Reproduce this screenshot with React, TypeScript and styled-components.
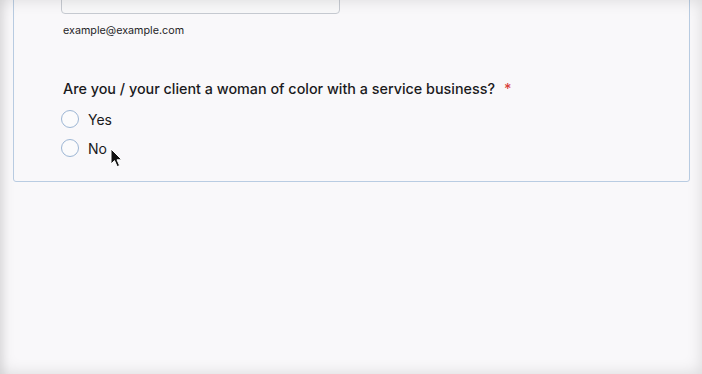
import React from "react";
import styled, { createGlobalStyle } from "styled-components";

const GlobalStyle = createGlobalStyle`
  html, body {
    margin: 0;
    padding: 0;
    background: #f9f8fa;
    overflow: hidden;
  }
  body {
    font-family: Inter, "Liberation Sans", sans-serif;
    color: #1d1d1f;
  }
`;

const Page = styled.div`
  height: 374px;
  padding: 0 12px 0 13px;
  box-sizing: border-box;
`;

const Vignette = styled.div`
  position: fixed;
  inset: 0;
  pointer-events: none;
  box-shadow: inset 0 0 16px rgba(0, 0, 0, 0.13), inset 10px 0 8px -6px rgba(0, 0, 0, 0.06);
`;

const Card = styled.div`
  margin-top: -43px;
  width: 677px;
  box-sizing: border-box;
  border: 1px solid #b9cce2;
  border-radius: 3px;
  padding: 16px 47px 21px;
  background: #f9f8fa;
`;

const InputBox = styled.div`
  width: 279px;
  height: 40px;
  box-sizing: border-box;
  border: 1px solid #c6cad1;
  border-radius: 4px;
  background: #f8f8f9;
`;

const Hint = styled.div`
  margin-top: 9px;
  padding-left: 2px;
  font-size: 10.75px;
  line-height: 16px;
  color: #262628;
`;

const Question = styled.div`
  margin-top: 39px;
  padding-left: 2px;
  font-size: 14.35px;
  line-height: 22px;
  font-weight: 500;
  color: #1a1a1c;
`;

const Required = styled.span`
  color: #d9403a;
  margin-left: 9px;
`;

const Options = styled.div`
  margin-top: 7px;
  display: flex;
  flex-direction: column;
  gap: 5px;
`;

const Option = styled.label`
  display: flex;
  align-items: center;
  gap: 9px;
  height: 24px;
  font-size: 14px;
  color: #1a1a1c;
  position: relative;
`;

const Radio = styled.span`
  width: 18px;
  height: 18px;
  box-sizing: border-box;
  border: 1px solid #9db6d4;
  border-radius: 50%;
  background: #fbfbfc;
`;

const Cursor = styled.svg`
  position: absolute;
  left: 49px;
  top: 12px;
`;

export default function App() {
  return (
    <>
      <GlobalStyle />
      <Page>
        <Card>
          <InputBox />
          <Hint>example@example.com</Hint>
          <Question>
            Are you / your client a woman of color with a service business?
            <Required>*</Required>
          </Question>
          <Options>
            <Option>
              <Radio />
              Yes
            </Option>
            <Option>
              <Radio />
              No
              <Cursor width="14" height="20" viewBox="0 0 14 20">
                <path
                  d="M1 1 L1 16 L4.5 12.6 L7.2 18.6 L9.6 17.6 L7 11.8 L11.8 11.8 Z"
                  fill="#111"
                  stroke="#fff"
                  strokeWidth="1"
                  strokeLinejoin="miter"
                />
              </Cursor>
            </Option>
          </Options>
        </Card>
      </Page>
      <Vignette />
    </>
  );
}
